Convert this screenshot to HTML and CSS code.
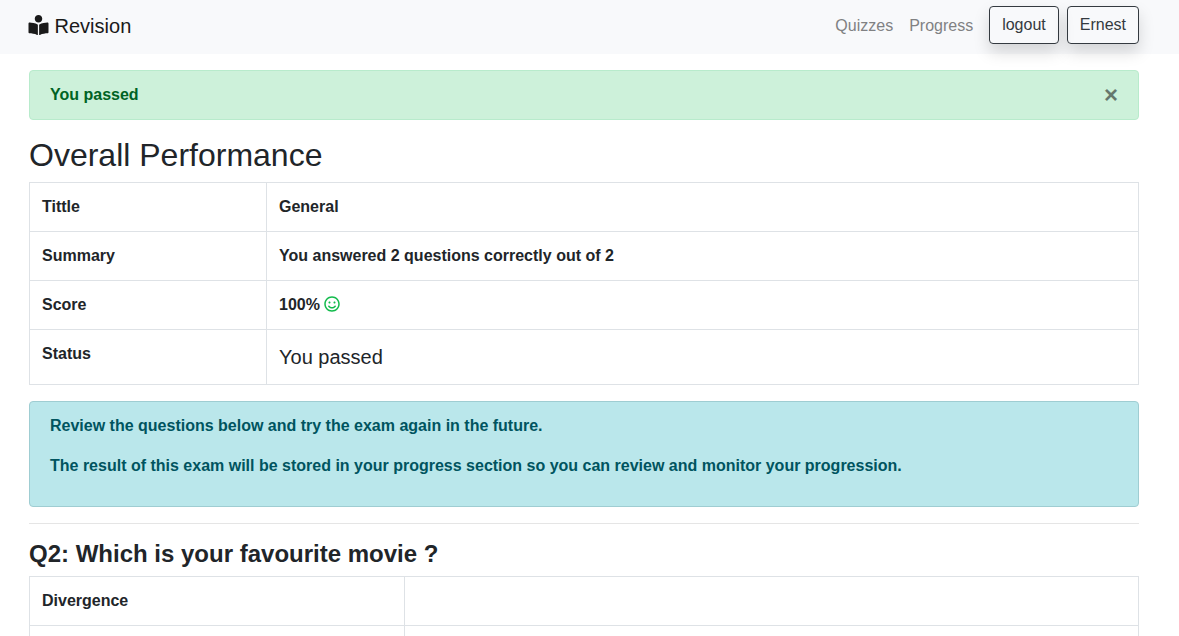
FILE: index.html
```html
<!DOCTYPE html>
<html lang="en">
<head>
<meta charset="utf-8">
<title>Revision</title>
<meta name="viewport" content="width=device-width, initial-scale=1">
<link rel="stylesheet" href="styles.css">
</head>
<body>
<nav class="navbar">
  <a class="brand" href="#">
    <svg class="brand-icon" viewBox="0 0 512 512" aria-hidden="true"><path fill="currentColor" d="M352 96c0-53.020-42.980-96-96-96s-96 42.980-96 96 42.980 96 96 96 96-42.980 96-96zM233.590 241.100c-59.330-36.320-155.430-46.300-203.790-49.050C13.550 191.130 0 203.510 0 219.140v222.800c0 14.330 11.590 26.280 26.490 27.050 43.660 2.290 131.990 10.680 193.040 41.430 9.370 4.720 20.480-1.710 20.480-11.870V252.560c-.01-4.670-2.320-8.950-6.420-11.460zm248.610-49.050c-48.350 2.740-144.460 12.730-203.780 49.050-4.100 2.510-6.410 6.960-6.410 11.630v245.790c0 10.190 11.140 16.630 20.540 11.900 61.040-30.720 149.320-39.110 192.970-41.400 14.900-.78 26.490-12.730 26.490-27.060V219.140c-.01-15.630-13.560-28.010-29.810-27.090z"/></svg>
    Revision
  </a>
  <div class="nav-items">
    <a class="nav-link" href="#">Quizzes</a>
    <a class="nav-link" href="#">Progress</a>
    <button class="btn" type="button">logout</button>
    <button class="btn" type="button">Ernest</button>
  </div>
</nav>

<main class="content">
  <div class="alert alert-success" role="alert">
    <strong>You passed</strong>
    <button class="close" type="button" aria-label="Close">×</button>
  </div>

  <h2 class="title">Overall Performance</h2>
  <table class="table results">
    <tbody>
      <tr><th scope="row">Tittle</th><td>General</td></tr>
      <tr><th scope="row">Summary</th><td>You answered 2 questions correctly out of 2</td></tr>
      <tr><th scope="row">Score</th><td>100%
        <svg class="smile" viewBox="0 0 496 512" aria-hidden="true"><path fill="currentColor" d="M248 8C111 8 0 119 0 256s111 248 248 248 248-111 248-248S385 8 248 8zm0 448c-110.300 0-200-89.700-200-200S137.700 56 248 56s200 89.700 200 200-89.700 200-200 200zm-80-216c17.700 0 32-14.300 32-32s-14.300-32-32-32-32 14.300-32 32 14.300 32 32 32zm160 0c17.700 0 32-14.300 32-32s-14.300-32-32-32-32 14.300-32 32 14.300 32 32 32zm4 72.600c-20.800 25-51.500 39.400-84 39.400s-63.200-14.300-84-39.400c-8.500-10.200-23.700-11.500-33.800-3.100-10.200 8.500-11.500 23.600-3.100 33.800 30 36 74.100 56.600 120.900 56.600s90.900-20.600 120.900-56.600c8.500-10.200 7.100-25.300-3.100-33.800-10.100-8.400-25.300-7.100-33.800 3.100z"/></svg></td></tr>
      <tr><th scope="row">Status</th><td class="status">You passed</td></tr>
    </tbody>
  </table>

  <div class="alert alert-info" role="alert">
    <p>Review the questions below and try the exam again in the future.</p>
    <p>The result of this exam will be stored in your progress section so you can review and monitor your progression.</p>
  </div>

  <hr class="divider">

  <h4 class="question">Q2: Which is your favourite movie ?</h4>
  <table class="table answers">
    <tbody>
      <tr><th scope="row">Divergence</th><td></td></tr>
      <tr><th scope="row"></th><td></td></tr>
    </tbody>
  </table>
</main>
</body>
</html>
```

FILE: styles.css
```css
*,
*::before,
*::after {
  box-sizing: border-box;
}

body {
  margin: 0;
  background: #fff;
  color: #212529;
  font-family: "Liberation Sans", Arial, sans-serif;
  font-size: 16px;
  line-height: 24px;
}

.navbar {
  display: flex;
  align-items: center;
  justify-content: space-between;
  padding: 6px 40px 8px 28px;
  background: #f8f9fb;
}

.brand {
  color: #1a1a1a;
  font-size: 20px;
  line-height: 30px;
  text-decoration: none;
}

.brand-icon {
  width: 21px;
  height: 20px;
  vertical-align: -2px;
}

.nav-items {
  display: flex;
  align-items: flex-start;
  gap: 8px;
}

.nav-link {
  padding: 8px 0;
  margin-right: 8px;
  color: #808183;
  text-decoration: none;
}

.btn {
  height: 38px;
  padding: 0 12px;
  border: 1px solid #343a40;
  border-radius: 4px;
  background: transparent;
  box-shadow: 0 8px 16px rgba(0, 0, 0, 0.15);
  color: #343a40;
  font: inherit;
  cursor: pointer;
}

.content {
  padding: 16px 40px 0 29px;
}

.alert {
  padding: 12px 20px;
  border: 1px solid;
  border-radius: 4px;
}

.alert-success {
  display: flex;
  justify-content: space-between;
  border-color: #b8ebcc;
  background: #cdf1da;
  color: #006324;
}

.close {
  height: 24px;
  padding: 0;
  border: 0;
  background: transparent;
  color: #000;
  font-family: inherit;
  font-size: 24px;
  font-weight: 700;
  line-height: 24px;
  opacity: 0.5;
  cursor: pointer;
}

.title {
  margin: 16px 0 8px;
  font-size: 32px;
  font-weight: 400;
  line-height: 38px;
}

.table {
  width: 100%;
  border-collapse: collapse;
  table-layout: fixed;
  font-weight: 700;
}

.table th,
.table td {
  height: 49px;
  padding: 12px;
  border: 1px solid #dee2e6;
  text-align: left;
  vertical-align: top;
}

.results {
  margin-bottom: 16px;
}

.results th {
  width: 237px;
}

.answers th {
  width: 375px;
}

.table .status {
  font-size: 20px;
  font-weight: 400;
  line-height: 30px;
}

.smile {
  width: 16px;
  height: 16px;
  vertical-align: -2px;
  color: #12bb4c;
}

.alert-info {
  border-color: #9fcdd2;
  background: #bae7eb;
  color: #00545f;
  font-weight: 700;
}

.alert-info p {
  margin: 0 0 16px;
}

.divider {
  margin: 16px 0;
  border: 0;
  border-top: 1px solid #e5e5e5;
}

.question {
  margin: 0 0 8px;
  font-size: 24px;
  font-weight: 700;
  line-height: 28px;
}
```
